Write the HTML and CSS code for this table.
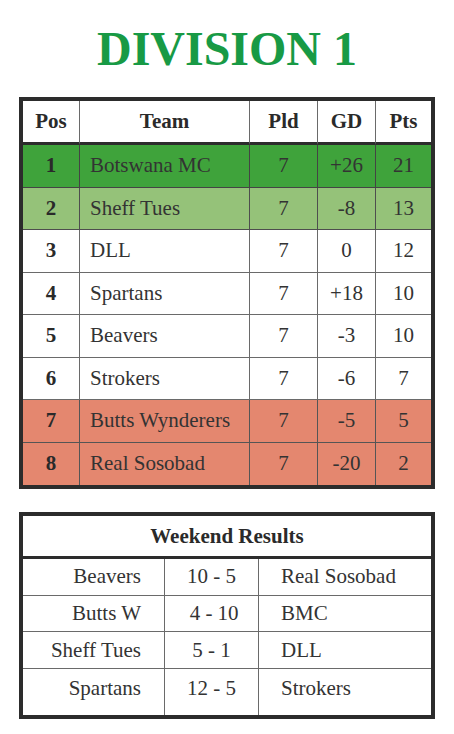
FILE: index.html
```html
<!DOCTYPE html>
<html>
<head>
<meta charset="utf-8">
<link rel="stylesheet" href="styles.css">
</head>
<body>
<div class="page">
  <h1 class="title">DIVISION 1</h1>
  <table class="league">
    <colgroup>
      <col class="c-pos"><col class="c-team"><col class="c-pld"><col class="c-gd"><col class="c-pts">
    </colgroup>
    <thead>
      <tr><th>Pos</th><th>Team</th><th>Pld</th><th>GD</th><th>Pts</th></tr>
    </thead>
    <tbody>
      <tr class="promo"><td class="pos">1</td><td class="team">Botswana MC</td><td>7</td><td>+26</td><td>21</td></tr>
      <tr class="playoff"><td class="pos">2</td><td class="team">Sheff Tues</td><td>7</td><td>-8</td><td>13</td></tr>
      <tr><td class="pos">3</td><td class="team">DLL</td><td>7</td><td>0</td><td>12</td></tr>
      <tr><td class="pos">4</td><td class="team">Spartans</td><td>7</td><td>+18</td><td>10</td></tr>
      <tr><td class="pos">5</td><td class="team">Beavers</td><td>7</td><td>-3</td><td>10</td></tr>
      <tr><td class="pos">6</td><td class="team">Strokers</td><td>7</td><td>-6</td><td>7</td></tr>
      <tr class="releg"><td class="pos">7</td><td class="team">Butts Wynderers</td><td>7</td><td>-5</td><td>5</td></tr>
      <tr class="releg"><td class="pos">8</td><td class="team">Real Sosobad</td><td>7</td><td>-20</td><td>2</td></tr>
    </tbody>
  </table>

  <table class="results">
    <colgroup>
      <col class="c-home"><col class="c-score"><col class="c-away">
    </colgroup>
    <thead>
      <tr><th colspan="3">Weekend Results</th></tr>
    </thead>
    <tbody>
      <tr><td class="home">Beavers</td><td class="score">10 - 5</td><td class="away">Real Sosobad</td></tr>
      <tr><td class="home">Butts W</td><td class="score">&nbsp;4 - 10</td><td class="away">BMC</td></tr>
      <tr><td class="home">Sheff Tues</td><td class="score">5 - 1</td><td class="away">DLL</td></tr>
      <tr class="last"><td class="home">Spartans</td><td class="score">12 - 5</td><td class="away">Strokers</td></tr>
    </tbody>
  </table>
</div>
</body>
</html>
```

FILE: styles.css
```css
html, body {
  margin: 0;
  padding: 0;
  background: #ffffff;
}

body {
  font-family: "Liberation Serif", "Times New Roman", serif;
  color: #333333;
}

.page {
  padding: 25px 19px 0 19px;
}

.title {
  margin: 0 0 24px 0;
  font-size: 48px;
  line-height: 48px;
  font-weight: bold;
  color: #189a45;
  text-align: center;
}

table {
  border-collapse: separate;
  border-spacing: 0;
  table-layout: fixed;
  width: 416px;
  border: 4px solid #2c2c2c;
  font-size: 21px;
}

th, td {
  box-sizing: border-box;
  padding: 0;
  border-right: 1px solid #6a6a6a;
  border-bottom: 1px solid #6a6a6a;
  text-align: center;
  vertical-align: middle;
  white-space: nowrap;
}

th:last-child, td:last-child {
  border-right: none;
}

tbody tr:last-child td {
  border-bottom: none;
}

th {
  font-weight: bold;
  color: #2a2a2a;
  border-bottom: 3px solid #2c2c2c;
}

/* League table */
.league .c-pos { width: 57px; }
.league .c-team { width: 170px; }
.league .c-pld { width: 68px; }
.league .c-gd { width: 58px; }
.league .c-pts { width: 55px; }

.league thead th {
  height: 44px;
}

.league tbody td {
  height: 42.5px;
}

.league .pos {
  font-weight: bold;
  color: #2a2a2a;
}

.league .team {
  text-align: left;
  padding-left: 10px;
}

.league .promo td {
  background: #3fa33b;
  border-color: #444444;
}

.league .playoff td {
  background: #95c279;
  border-color: #4e4e4e;
}

.league .releg td {
  background: #e4876f;
  border-color: #555555;
}

/* Results table */
.results {
  margin-top: 23px;
}

.results .c-home { width: 142px; }
.results .c-score { width: 94px; }
.results .c-away { width: 172px; }

.results thead th {
  height: 43px;
}

.results tbody td {
  height: 36.7px;
}

.results .home {
  text-align: right;
  padding-right: 23px;
}

.results .away {
  text-align: left;
  padding-left: 22px;
}

.results tr.last td {
  height: 46px;
  padding-bottom: 7px;
}
```
